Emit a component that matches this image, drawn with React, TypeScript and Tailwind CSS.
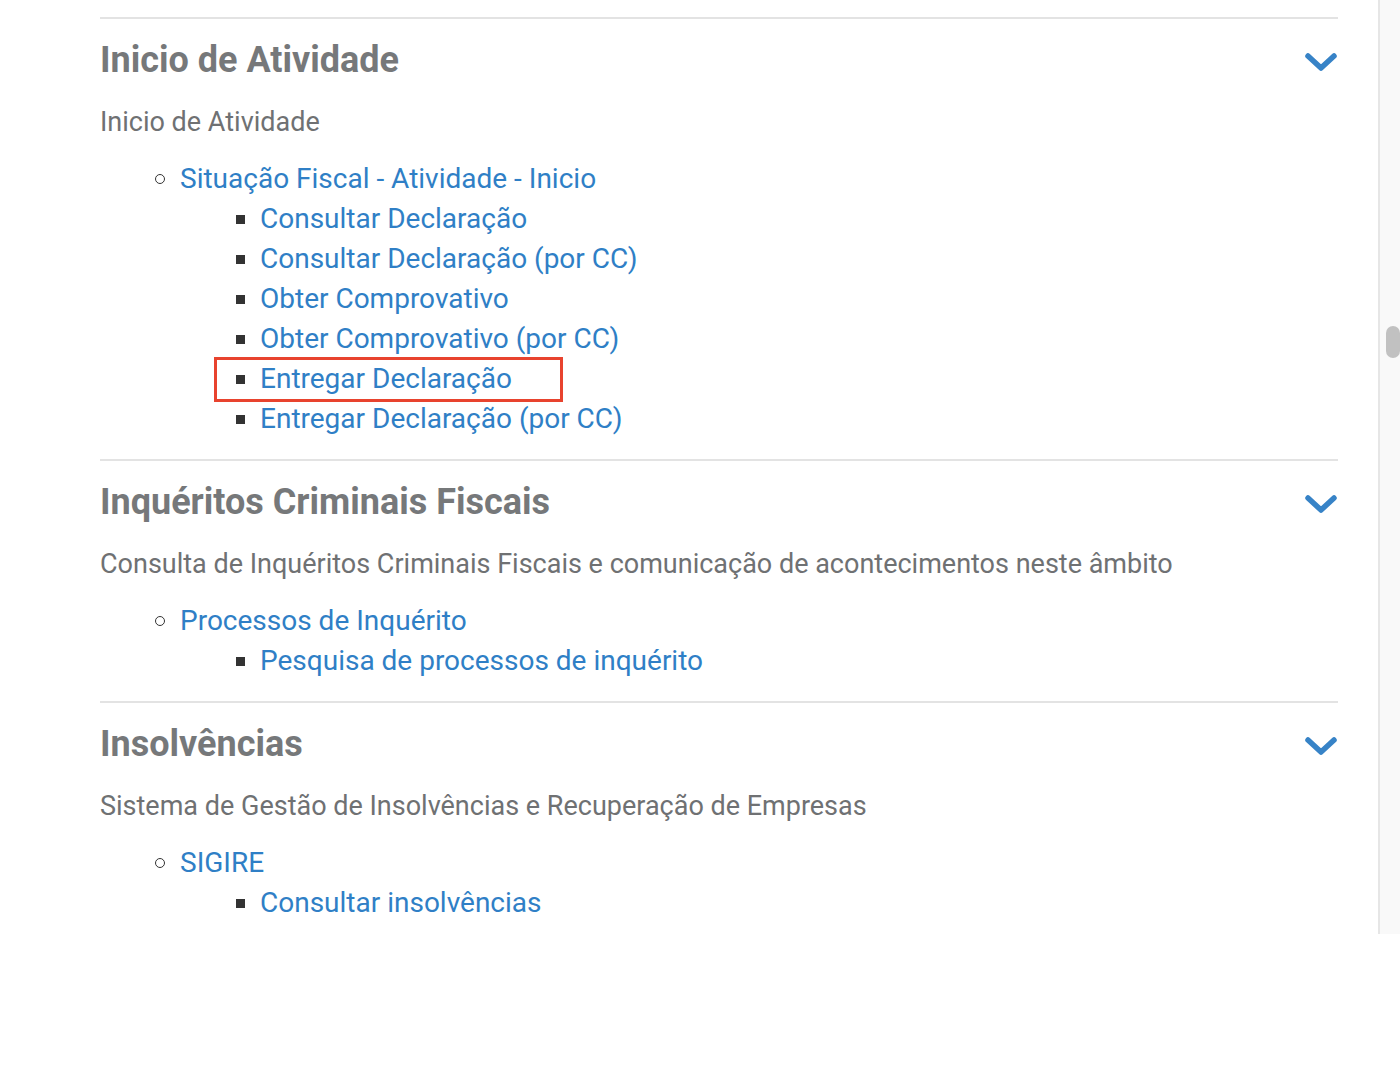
const sections = [
  {
    title: 'Inicio de Atividade',
    description: 'Inicio de Atividade',
    group: 'Situação Fiscal - Atividade - Inicio',
    items: [
      'Consultar Declaração',
      'Consultar Declaração (por CC)',
      'Obter Comprovativo',
      'Obter Comprovativo (por CC)',
      'Entregar Declaração',
      'Entregar Declaração (por CC)',
    ],
    highlight: 'Entregar Declaração',
  },
  {
    title: 'Inquéritos Criminais Fiscais',
    description:
      'Consulta de Inquéritos Criminais Fiscais e comunicação de acontecimentos neste âmbito',
    group: 'Processos de Inquérito',
    items: ['Pesquisa de processos de inquérito'],
  },
  {
    title: 'Insolvências',
    description: 'Sistema de Gestão de Insolvências e Recuperação de Empresas',
    group: 'SIGIRE',
    items: ['Consultar insolvências'],
  },
];

function Chevron() {
  return (
    <svg width="34" height="24" viewBox="0 0 34 24" fill="none" className="mt-[4px]">
      <path
        d="M4 6 L17 18 L30 6"
        stroke="#3783c7"
        strokeWidth="5.5"
        strokeLinecap="round"
        strokeLinejoin="round"
      />
    </svg>
  );
}

export default function App() {
  return (
    <div className="flex h-[1080px] w-[1400px] bg-white font-['Roboto',sans-serif]">
      <div className="flex-1 pl-[100px] pr-[40px] pt-[17px]">
        {sections.map((s) => (
          <section key={s.title} className="border-t-2 border-[#e3e3e3] pb-[20px]">
            <div className="flex h-[81px] items-center justify-between">
              <h2 className="text-[36px] font-bold text-[#76787a]">{s.title}</h2>
              <Chevron />
            </div>
            <p className="text-[27px] leading-[44px] text-[#6f7173]">{s.description}</p>
            <ul className="mt-[15px] pl-[80px] text-[28px] leading-[40px] text-[#2f7fc6]">
              <li className="relative">
                <span className="absolute left-[-25px] top-[15px] h-[10px] w-[10px] rounded-full border border-[#333]" />
                {s.group}
                <ul className="pl-[80px]">
                  {s.items.map((it) => (
                    <li key={it} className="relative">
                      <span className="absolute left-[-24px] top-[16px] h-[9px] w-[9px] bg-[#333]" />
                      {s.highlight === it && (
                        <span className="absolute left-[-46px] top-[-2px] h-[45px] w-[349px] border-[3px] border-[#e8432e]" />
                      )}
                      {it}
                    </li>
                  ))}
                </ul>
              </li>
            </ul>
          </section>
        ))}
      </div>
      <div className="h-[934px] w-[22px] border-l-2 border-[#e6e6e6] bg-[#f9f9f9] pt-[326px] pl-[6px]">
        <div className="h-[32px] w-[14px] rounded-[7px] bg-[#c1c1c1]" />
      </div>
    </div>
  );
}
